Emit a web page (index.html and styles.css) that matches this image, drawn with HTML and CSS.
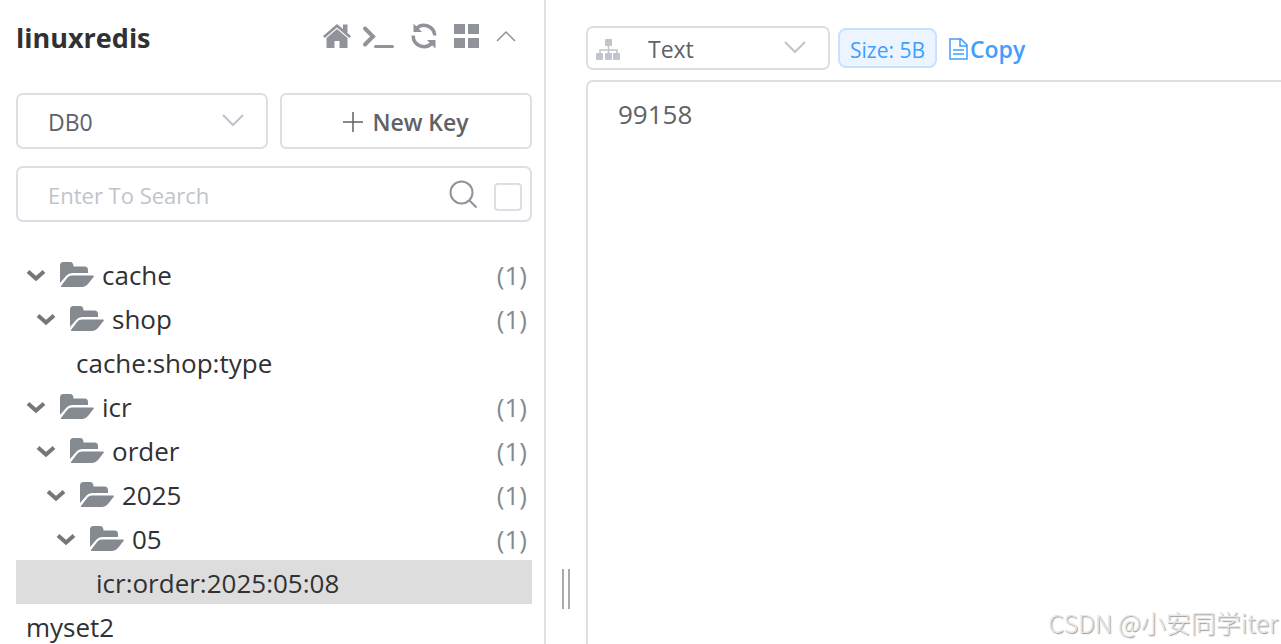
FILE: index.html
```html
<!DOCTYPE html>
<html lang="en">
<head>
    <meta charset="UTF-8">
    <meta name="viewport" content="width=device-width, initial-scale=1.0">
    <title>linuxredis</title>
    <link rel="stylesheet" href="styles.css">
</head>
<body>
    <!-- shared tree icons -->
    <svg class="symbols" aria-hidden="true">
        <symbol id="arrow" viewBox="0 0 20 20">
            <path d="M2 6.500l8 7 8-7" fill="none" stroke="currentColor" stroke-width="4"/>
        </symbol>
        <symbol id="folder" viewBox="0 0 34 26">
            <path d="M0 21V3.500Q0 0 3.500 0H10Q13.500 0 13.500 4.500H24.500Q28 4.500 28 8V11H12Q8.500 11 6.500 13.500Z" fill="currentColor"/>
            <path d="M1 24L7.500 15.500Q9 13.500 12 13.500H33Q34.500 13.500 33.500 15L28 22Q25.500 25 22.500 25H2Q0.500 25 1 24Z" fill="currentColor"/>
        </symbol>
        <symbol id="chevron" viewBox="0 0 24 14">
            <path d="M2 2l10 10L22 2" fill="none" stroke="currentColor" stroke-width="2"/>
        </symbol>
    </svg>

    <div class="app">
        <aside class="sidebar">
            <header class="connection">
                <h1 class="connection-name">linuxredis</h1>
                <div class="connection-tools">
                    <button class="icon-btn" aria-label="Home">
                        <svg width="30" height="26" viewBox="0 0 30 26" fill="currentColor">
                            <path d="M15 1L1 13l1.800 2L15 4.600 27.200 15 29 13 25.500 10V1.500h-4.500V6Z"/>
                            <path d="M15 6L4.500 15V25H12.500V18h5v7H25.500V15Z"/>
                        </svg>
                    </button>
                    <button class="icon-btn" aria-label="Console">
                        <svg width="32" height="26" viewBox="0 0 32 26" fill="none" stroke="currentColor" stroke-linecap="round">
                            <path d="M3 5.500l8 8-8 8" stroke-width="4"/>
                            <path d="M13.500 23.500h17" stroke-width="3"/>
                        </svg>
                    </button>
                    <button class="icon-btn" aria-label="Refresh">
                        <svg width="28" height="28" viewBox="0 0 28 28">
                            <path d="M6 7A10.800 10.800 0 0 1 24.800 13.500M22 21A10.800 10.800 0 0 1 3.200 13.500" fill="none" stroke="currentColor" stroke-width="3.500"/>
                            <path d="M3.500 1.500V10H12L9 7ZM25.500 26.500V18H17L20 21Z" fill="currentColor"/>
                        </svg>
                    </button>
                    <button class="icon-btn" aria-label="Menu">
                        <svg width="26" height="26" viewBox="0 0 26 26" fill="currentColor">
                            <path d="M0 1h11v10H0zM14 1h11v10H14zM0 15h11v10H0zM14 15h11v10H14z"/>
                        </svg>
                    </button>
                    <button class="icon-btn" aria-label="Collapse">
                        <svg width="20" height="12" viewBox="0 0 20 12">
                            <path d="M1 11l9-9 9 9" fill="none" stroke="currentColor" stroke-width="1.500"/>
                        </svg>
                    </button>
                </div>
            </header>

            <div class="db-row">
                <div class="select-box">
                    <select class="select" aria-label="Database">
                        <option>DB0</option>
                    </select>
                    <svg class="select-arrow" width="24" height="14"><use href="#chevron"/></svg>
                </div>
                <button class="new-key">
                    <svg width="20" height="20" viewBox="0 0 20 20">
                        <path d="M10 0v20M0 10h20" stroke="currentColor" stroke-width="1.500"/>
                    </svg>
                    <span>New Key</span>
                </button>
            </div>

            <div class="search">
                <input class="search-input" type="text" placeholder="Enter To Search" aria-label="Search keys">
                <button class="icon-btn" aria-label="Search">
                    <svg width="28" height="28" viewBox="0 0 28 28" fill="none" stroke="currentColor" stroke-width="2">
                        <circle cx="12.500" cy="12.500" r="11"/>
                        <path d="M20 20l7.500 7.500"/>
                    </svg>
                </button>
                <input class="exact" type="checkbox" aria-label="Exact search">
            </div>

            <ul class="tree">
                <li><button class="node level-0">
                    <svg class="arrow"><use href="#arrow"/></svg><svg class="folder"><use href="#folder"/></svg>
                    <span class="name">cache</span><span class="count">(1)</span>
                </button></li>
                <li><button class="node level-1">
                    <svg class="arrow"><use href="#arrow"/></svg><svg class="folder"><use href="#folder"/></svg>
                    <span class="name">shop</span><span class="count">(1)</span>
                </button></li>
                <li><button class="node key-2">cache:shop:type</button></li>
                <li><button class="node level-0">
                    <svg class="arrow"><use href="#arrow"/></svg><svg class="folder"><use href="#folder"/></svg>
                    <span class="name">icr</span><span class="count">(1)</span>
                </button></li>
                <li><button class="node level-1">
                    <svg class="arrow"><use href="#arrow"/></svg><svg class="folder"><use href="#folder"/></svg>
                    <span class="name">order</span><span class="count">(1)</span>
                </button></li>
                <li><button class="node level-2">
                    <svg class="arrow"><use href="#arrow"/></svg><svg class="folder"><use href="#folder"/></svg>
                    <span class="name">2025</span><span class="count">(1)</span>
                </button></li>
                <li><button class="node level-3">
                    <svg class="arrow"><use href="#arrow"/></svg><svg class="folder"><use href="#folder"/></svg>
                    <span class="name">05</span><span class="count">(1)</span>
                </button></li>
                <li><button class="node key-4 selected">icr:order:2025:05:08</button></li>
                <li><button class="node key-0">myset2</button></li>
            </ul>
        </aside>

        <div class="resizer"><span class="grip"></span></div>

        <main class="content">
            <div class="toolbar">
                <div class="select-box format">
                    <svg class="format-icon" width="26" height="22" viewBox="0 0 26 22">
                        <path d="M12.500 7v8M4 15v-4h17v4" fill="none" stroke="currentColor" stroke-width="1.500"/>
                        <g fill="currentColor">
                            <rect x="9" y="0" width="7" height="7" rx="1"/>
                            <rect x="0" y="14" width="7" height="7" rx="1"/>
                            <rect x="9" y="14" width="7" height="7" rx="1"/>
                            <rect x="17" y="14" width="7" height="7" rx="1"/>
                        </g>
                    </svg>
                    <select class="select" aria-label="View format">
                        <option>Text</option>
                    </select>
                    <svg class="select-arrow" width="24" height="14"><use href="#chevron"/></svg>
                </div>
                <span class="size-tag">Size: 5B</span>
                <button class="copy">
                    <svg width="20" height="22" viewBox="0 0 20 22" fill="none" stroke="currentColor" stroke-width="1.500">
                        <path d="M1 1h11l6 6v14H1zM11 1v7h7M4 12h11M4 16h11"/>
                    </svg>
                    <span>Copy</span>
                </button>
            </div>
            <textarea class="value" aria-label="Value" spellcheck="false">99158</textarea>
        </main>
    </div>

    <div class="watermark">CSDN @小安同学iter</div>
</body>
</html>
```
FILE: styles.css
```css
* {
    box-sizing: border-box;
}

body {
    margin: 0;
    height: 100vh;
    overflow: hidden;
    background: #fff;
    color: #303133;
    font-family: "Open Sans", "Noto Sans", sans-serif;
}

button,
input,
select,
textarea {
    margin: 0;
    font-family: inherit;
}

button {
    padding: 0;
    border: none;
    background: none;
    color: inherit;
    cursor: pointer;
}

.symbols {
    display: none;
}

.app {
    display: flex;
    height: 100vh;
}

/* sidebar */
.sidebar {
    flex: 0 0 546px;
    padding: 16px 12px 0 16px;
    border-right: 2px solid #e1dfe1;
    overflow: hidden;
}

.connection {
    display: flex;
    align-items: flex-start;
    justify-content: space-between;
    height: 44px;
    margin-bottom: 33px;
}

.connection-name {
    margin: 0;
    font-size: 27px;
    line-height: 44px;
}

.connection-tools {
    display: flex;
    align-items: center;
    gap: 16px;
    height: 40px;
    padding-right: 16px;
}

.icon-btn {
    display: flex;
    color: #909399;
}

.connection-tools .icon-btn:first-child {
    margin-right: -6px;
}

.db-row {
    display: grid;
    grid-template-columns: 1fr 1fr;
    gap: 12px;
    margin-bottom: 17px;
}

.select-box {
    display: grid;
    align-items: center;
    height: 56px;
    border: 2px solid #dcdfe6;
    border-radius: 7px;
    color: #c0c4cc;
}

.select,
.select-arrow,
.format-icon {
    grid-area: 1 / 1;
}

.select {
    appearance: none;
    width: 100%;
    height: 100%;
    padding: 2px 30px 0;
    border: none;
    background: none;
    color: #606266;
    font-size: 23px;
}

.select-arrow {
    justify-self: end;
    margin: 0 21px 2px 0;
    pointer-events: none;
}

.new-key {
    display: flex;
    align-items: center;
    justify-content: center;
    gap: 9px;
    height: 56px;
    padding-top: 2px;
    border: 2px solid #dcdfe6;
    border-radius: 6px;
    color: #606266;
    font-size: 23px;
    font-weight: 600;
}

.search {
    display: flex;
    align-items: center;
    height: 56px;
    margin-bottom: 30px;
    padding: 0 8px 0 30px;
    border: 2px solid #dcdfe6;
    border-radius: 7px;
}

.search-input {
    flex: 1;
    min-width: 0;
    padding: 2px 0 0;
    border: none;
    outline: none;
    color: #606266;
    font-size: 22px;
}

.search-input::placeholder {
    color: #c0c4cc;
}

.exact {
    appearance: none;
    width: 28px;
    height: 28px;
    margin: 6px 0 0 17px;
    border: 2px solid #dcdfe6;
    border-radius: 4px;
}

/* key tree */
.tree {
    margin: 0;
    padding: 0;
    list-style: none;
}

.node {
    display: flex;
    align-items: center;
    width: 100%;
    height: 44px;
    padding-top: 2px;
    padding-right: 5px;
    font-size: 26px;
    line-height: 36px;
    text-align: left;
}

.level-0 { padding-left: 10px; }
.level-1 { padding-left: 20px; }
.level-2 { padding-left: 30px; }
.level-3 { padding-left: 40px; }

.key-0 { padding-left: 10px; }
.key-2 { padding-left: 60px; }
.key-4 { padding-left: 80px; }

.selected {
    background: #ddd;
}

.arrow {
    width: 20px;
    height: 20px;
    margin-right: 14px;
    color: #777;
}

.folder {
    width: 34px;
    height: 26px;
    margin-right: 8px;
    color: #848a90;
}

.name {
    flex: 1;
}

.count {
    color: #848a90;
}

/* drag handle */
.resizer {
    display: flex;
    flex: 0 0 40px;
    align-items: flex-end;
    justify-content: center;
    padding-bottom: 35px;
    cursor: col-resize;
}

.grip {
    width: 8px;
    height: 40px;
    border: solid #aaa;
    border-width: 0 2px;
}

/* value panel */
.content {
    display: flex;
    flex: 1;
    flex-direction: column;
    min-width: 0;
    padding-top: 26px;
}

.toolbar {
    display: flex;
    align-items: center;
    gap: 8px;
    margin-bottom: 10px;
}

.format {
    width: 244px;
    height: 44px;
}

.format .select {
    padding-left: 60px;
}

.format-icon {
    margin: 4px 0 0 8px;
}

.size-tag {
    height: 40px;
    padding: 0 10px;
    border: 2px solid #c6e2ff;
    border-radius: 8px;
    background: #ecf5ff;
    color: #409eff;
    font-size: 21px;
    line-height: 40px;
}

.copy {
    display: flex;
    align-items: center;
    gap: 1px;
    margin-left: 4px;
    padding-top: 2px;
    color: #409eff;
    font-size: 23px;
    font-weight: 600;
}

.value {
    flex: 1;
    width: 100%;
    padding: 12px 30px;
    border: solid #dcdfe6;
    border-width: 2px 0 0 2px;
    border-radius: 7px 0 0 0;
    outline: none;
    resize: none;
    color: #606266;
    font-size: 26px;
    line-height: 40px;
}

.watermark {
    position: absolute;
    right: 3px;
    bottom: 4px;
    color: #e6e6e6;
    font-family: "Noto Sans CJK SC", sans-serif;
    font-size: 25px;
    font-weight: 300;
    line-height: 36px;
    text-shadow: 1px 1px 1px #999;
    pointer-events: none;
}
```
